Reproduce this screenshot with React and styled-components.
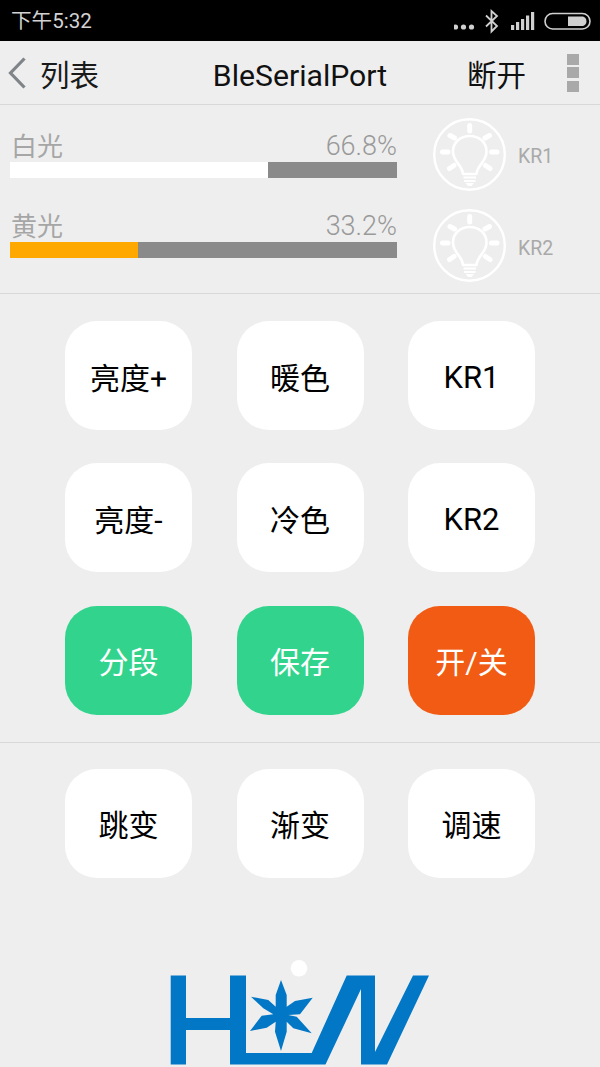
import React from 'react';
import styled, { createGlobalStyle } from 'styled-components';

const Global = createGlobalStyle`
  html, body { margin: 0; padding: 0; background: #eeeeee; }
  #root { width: 600px; height: 1067px; overflow: hidden; }
`;
const FONT = `Roboto, "Noto Sans CJK SC", sans-serif`;

const Page = styled.div`
  width: 600px; height: 1067px; background: #eeeeee; font-family: ${FONT};
  display: flex; flex-direction: column; overflow: hidden;
`;
const StatusBar = styled.div`
  height: 41px; flex: none; background: #000; display: flex; align-items: center;
  justify-content: space-between; padding: 0 9px 0 11px; box-sizing: border-box;
`;
const Clock = styled.span`
  font-size: 20.6px; color: #d2d2d2; line-height: 41px; padding-top: 2px;
`;
const NavBar = styled.div`
  height: 64px; flex: none; box-sizing: border-box; border-bottom: 1px solid #d8d8d8;
  display: flex; align-items: center; padding-left: 8px;
`;
const BackLabel = styled.span`
  font-size: 29.5px; color: #1a1a1a; margin-left: 14px;
`;
const Title = styled.span`
  font-size: 30.2px; color: #111; margin-left: 114px; width: 174px; white-space: nowrap;
  display: flex; justify-content: center; padding-top: 5px;
`;
const Action = styled.span`
  font-size: 29.5px; color: #111; margin-left: 80px;
`;
const Kebab = styled.div`
  margin-left: 41px; display: flex; flex-direction: column; gap: 2.5px;
`;
const KebabDot = styled.span`
  width: 12px; height: 11px; background: #a9a9a9; display: block;
`;
const MeterPanel = styled.div`
  height: 189px; flex: none; box-sizing: border-box; border-bottom: 1px solid #d8d8d8;
  display: flex; padding-left: 10px;
`;
const Meters = styled.div`
  width: 387px; padding-top: 25px; display: flex; flex-direction: column; gap: 32px;
`;
const MeterHead = styled.div`
  height: 32px; display: flex; justify-content: space-between; align-items: center;
  color: #a6a6a6; padding-left: 1px;
`;
const MeterName = styled.span`
  font-size: 26px; padding-bottom: 4px;
`;
const MeterValue = styled.span`
  font-size: 27px; font-weight: 300; color: #999;
`;
const Track = styled.div`
  height: 16px; background: #8a8a8a; display: flex;
`;
const Fill = styled.div`
  height: 100%; background: ${p => p.$color};
`;
const Lamps = styled.div`
  margin-left: 36px; padding-top: 13px; display: flex; flex-direction: column; gap: 18px;
`;
const Lamp = styled.div`
  display: flex; align-items: center; gap: 12px; height: 73px;
`;
const LampLabel = styled.span`
  font-size: 19.5px; color: #a9a9a9; padding-top: ${p => p.$drop}px;
`;
const ButtonGrid = styled.div`
  flex: none; box-sizing: border-box; padding: ${p => p.$top}px 65px 0;
  display: grid; grid-template-columns: repeat(3, 127px); column-gap: 44.5px; row-gap: 33.4px;
  grid-auto-rows: 109px;
`;
const Divided = styled(ButtonGrid)`
  padding-bottom: 27px; border-bottom: 1px solid #d8d8d8;
`;
const Key = styled.div`
  border-radius: 32px; background: ${p => p.$bg || '#fff'}; color: ${p => (p.$bg ? '#fff' : '#000')};
  display: flex; align-items: center; justify-content: center;
  font-size: ${p => (p.$latin ? 31 : 30)}px;
  padding-top: ${p => (p.$latin ? 3 : 0)}px; box-sizing: border-box;
`;
const LogoWrap = styled.div`
  flex: none; padding-left: 170px; margin-top: 82px;
`;
const Logo = styled.svg`
  display: block; width: 260px; height: 107px;
`;

const StatusIcons = () => (
  <svg width="137" height="41" viewBox="454 0 137 41" style={{ display: 'block' }}>
    <circle cx="455.5" cy="27" r="2.6" fill="#d0d0d0" />
    <circle cx="463.5" cy="27" r="2.6" fill="#d0d0d0" />
    <circle cx="471.5" cy="27" r="2.6" fill="#d0d0d0" />
    <path d="M486 15.5 L497 26 L491.5 31.5 V11 L497 16 L486 26.5" fill="none" stroke="#d0d0d0" strokeWidth="1.8" />
    <rect x="511" y="25" width="3.2" height="5" fill="#d0d0d0" />
    <rect x="516" y="22" width="3.2" height="8" fill="#d0d0d0" />
    <rect x="521" y="19" width="3.2" height="11" fill="#d0d0d0" />
    <rect x="526" y="15.5" width="3.2" height="14.5" fill="#d0d0d0" />
    <rect x="531" y="12" width="3.2" height="18" fill="#d0d0d0" />
    <rect x="545" y="13.5" width="45" height="15.5" rx="7.7" fill="none" stroke="#d0d0d0" strokeWidth="1.6" />
    <path d="M568 16.5 H583 A5 5 0 0 1 583 26 H568 Z" fill="#d0d0d0" />
  </svg>
);

const Bulb = () => (
  <svg width="73" height="73" viewBox="0 0 73 73" style={{ display: 'block' }}>
    <circle cx="36.5" cy="36.5" r="35.3" fill="none" stroke="#fff" strokeWidth="2.4" />
    <g stroke="#fff" strokeWidth="5" strokeLinecap="round" fill="none">
      <path d="M36.7 7.5 V13" />
      <path d="M17 17.5 L21.5 20" />
      <path d="M56.5 17.5 L52 20" />
      <path d="M9.5 34 H15" />
      <path d="M58.5 34 H64" />
      <path d="M16.5 50.5 L21 47.5" />
      <path d="M57 50.5 L52.5 47.5" />
    </g>
    <path d="M30 56 C29.5 47 20 44 20 33.5 C20 24 27.5 18 36.7 18 C46 18 53.5 24 53.5 33.5 C53.5 44 44 47 43.5 56 Z" fill="none" stroke="#fff" strokeWidth="2.6" strokeLinejoin="round" />
    <path d="M30.5 59.5 H43 M31 63 H42.5" stroke="#fff" strokeWidth="2.2" />
    <path d="M32.5 65 H41 L38.5 68 H35 Z" fill="#fff" />
  </svg>
);

const TRACK_WIDTH = 387;
const meters = [
  { label: '白光', value: 66.8, color: '#ffffff' },
  { label: '黄光', value: 33.2, color: '#ffa800' },
];
const lamps = [
  { label: 'KR1', drop: 3 },
  { label: 'KR2', drop: 5 },
];
const group1 = [
  { t: '亮度+' }, { t: '暖色' }, { t: 'KR1', latin: true },
  { t: '亮度-' }, { t: '冷色' }, { t: 'KR2', latin: true },
  { t: '分段', bg: '#32d48d' }, { t: '保存', bg: '#32d48d' }, { t: '开/关', bg: '#f15b13' },
];
const group2 = ['跳变', '渐变', '调速'];

export default function App() {
  return (
    <Page>
      <Global />
      <StatusBar>
        <Clock>下午5:32</Clock>
        <StatusIcons />
      </StatusBar>
      <NavBar>
        <svg width="18" height="32" viewBox="0 0 18 32" style={{ display: 'block' }}>
          <path d="M16.5 1.5 L2.5 16 L16.5 30.5" fill="none" stroke="#7f8488" strokeWidth="3.2" />
        </svg>
        <BackLabel>列表</BackLabel>
        <Title>BleSerialPort</Title>
        <Action>断开</Action>
        <Kebab>
          <KebabDot /><KebabDot /><KebabDot />
        </Kebab>
      </NavBar>
      <MeterPanel>
        <Meters>
          {meters.map(m => (
            <div key={m.label}>
              <MeterHead>
                <MeterName>{m.label}</MeterName>
                <MeterValue>{m.value}%</MeterValue>
              </MeterHead>
              <Track>
                <Fill $color={m.color} style={{ width: Math.floor((TRACK_WIDTH * m.value) / 100) }} />
              </Track>
            </div>
          ))}
        </Meters>
        <Lamps>
          {lamps.map(l => (
            <Lamp key={l.label}>
              <Bulb />
              <LampLabel $drop={l.drop}>{l.label}</LampLabel>
            </Lamp>
          ))}
        </Lamps>
      </MeterPanel>
      <Divided $top={27}>
        {group1.map(k => <Key key={k.t} $bg={k.bg} $latin={k.latin}>{k.t}</Key>)}
      </Divided>
      <ButtonGrid $top={26}>
        {group2.map(t => <Key key={t}>{t}</Key>)}
      </ButtonGrid>
      <LogoWrap>
        <Logo viewBox="170 960 260 107">
          <circle cx="299" cy="968.3" r="8.3" fill="#fff" />
          <path fill="#0277c6" d="M170.7 975.5 H186 V1018 H230 V975.5 H246 V1053 H311.7 L346.7 975.5 H375 V1052 L413 975.5 H429 L387 1064.5 H361 V989 L325.5 1064.5 H230 V1030 H186 V1064.5 H170.7 Z" />
          <path fill="#0277c6" d="M281 980 L286.7 995 L286.7 1006.7 L295 1001 L312.7 997.7 L300 1014.3 L288.3 1015 L296.7 1016.7 L311.7 1033.3 L293.3 1028.3 L286.7 1021.7 L286.7 1031.7 L281 1051 L275 1031.7 L275.7 1021.7 L266.7 1027.7 L250 1031 L261.7 1015.7 L273.3 1014.3 L263.3 1008.3 L251 996.7 L268.3 1000 L275.7 1006.7 L275.7 995 Z" />
        </Logo>
      </LogoWrap>
    </Page>
  );
}
